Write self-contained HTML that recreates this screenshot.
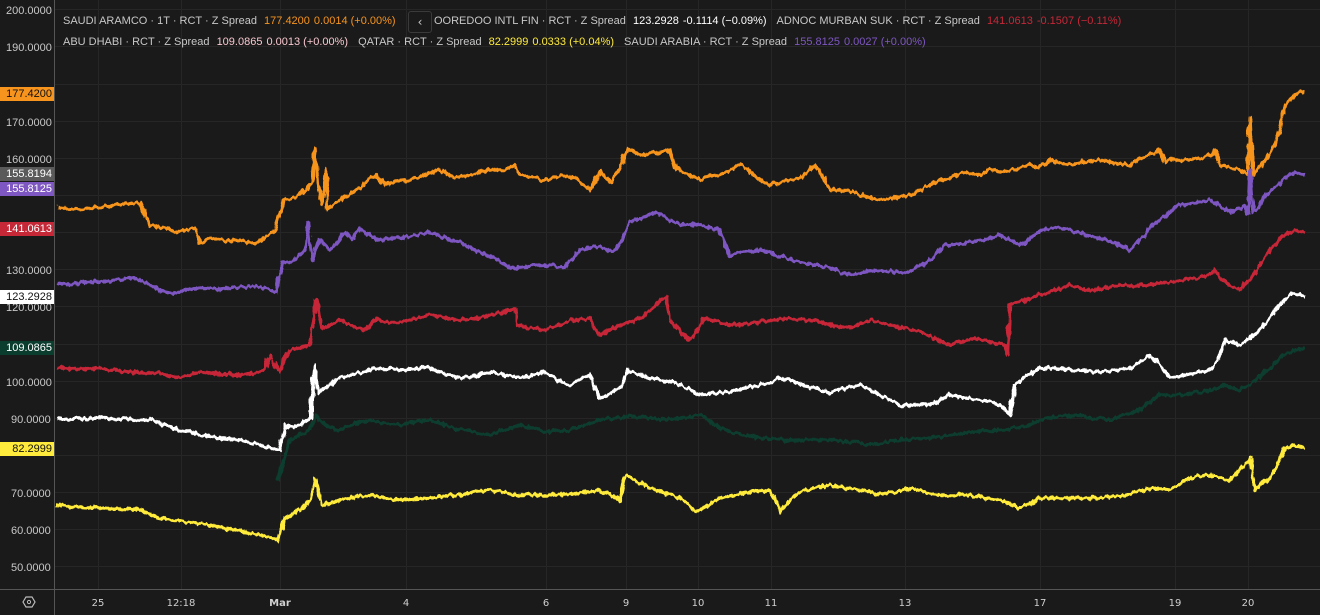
<!DOCTYPE html>
<html><head><meta charset="utf-8"><style>
html,body{margin:0;padding:0;background:#1a1a1a;width:1320px;height:615px;overflow:hidden;font-family:"Liberation Sans",sans-serif}
.lg{position:absolute;font-size:11px;color:#c8c8c8;white-space:nowrap}
.lg span{margin-left:4px}
.tag{position:absolute;left:0;width:54px;height:14px;font-size:11px;line-height:14px;text-align:right;padding-right:2px;box-sizing:border-box;color:#fff}
</style></head><body>
<svg width="1320" height="615" style="position:absolute;left:0;top:0">
<defs>
<filter id="jit" x="-2%" y="-10%" width="104%" height="120%">
<feTurbulence type="fractalNoise" baseFrequency="0.25 0.08" numOctaves="2" seed="3" result="n"/>
<feDisplacementMap in="SourceGraphic" in2="n" scale="6" xChannelSelector="R" yChannelSelector="G"/>
</filter>
</defs>
<g stroke="#262626" stroke-width="1">
<line x1="55" x2="1320" y1="9.5" y2="9.5"/><line x1="55" x2="1320" y1="46.5" y2="46.5"/><line x1="55" x2="1320" y1="84.5" y2="84.5"/><line x1="55" x2="1320" y1="121.5" y2="121.5"/><line x1="55" x2="1320" y1="158.5" y2="158.5"/><line x1="55" x2="1320" y1="195.5" y2="195.5"/><line x1="55" x2="1320" y1="232.5" y2="232.5"/><line x1="55" x2="1320" y1="269.5" y2="269.5"/><line x1="55" x2="1320" y1="306.5" y2="306.5"/><line x1="55" x2="1320" y1="344.5" y2="344.5"/><line x1="55" x2="1320" y1="381.5" y2="381.5"/><line x1="55" x2="1320" y1="418.5" y2="418.5"/><line x1="55" x2="1320" y1="455.5" y2="455.5"/><line x1="55" x2="1320" y1="492.5" y2="492.5"/><line x1="55" x2="1320" y1="529.5" y2="529.5"/><line x1="55" x2="1320" y1="566.5" y2="566.5"/>
<line x1="98.5" x2="98.5" y1="0" y2="589"/><line x1="181.5" x2="181.5" y1="0" y2="589"/><line x1="280.5" x2="280.5" y1="0" y2="589"/><line x1="406.5" x2="406.5" y1="0" y2="589"/><line x1="546.5" x2="546.5" y1="0" y2="589"/><line x1="626.5" x2="626.5" y1="0" y2="589"/><line x1="698.5" x2="698.5" y1="0" y2="589"/><line x1="771.5" x2="771.5" y1="0" y2="589"/><line x1="905.5" x2="905.5" y1="0" y2="589"/><line x1="1040.5" x2="1040.5" y1="0" y2="589"/><line x1="1175.5" x2="1175.5" y1="0" y2="589"/><line x1="1248.5" x2="1248.5" y1="0" y2="589"/>
</g>
<line x1="54.5" x2="54.5" y1="0" y2="615" stroke="#555"/>
<line x1="0" x2="1320" y1="589.5" y2="589.5" stroke="#555"/>
<g fill="none" stroke-width="3.4" stroke-linejoin="round" filter="url(#jit)">
<polyline stroke="#f7941d" points="57,207 80,209 100,207 120,205 140,203 145,215 150,225 165,228 180,232 195,228 200,242 210,238 225,241 240,240 255,244 265,237 275,230 280,215 283,200 295,198 305,190 312,182 315,148 318,185 322,205 326,170 328,210 340,200 360,188 375,175 385,185 395,182 410,180 425,175 440,170 455,178 470,175 490,170 505,170 515,165 520,175 535,178 545,180 560,176 575,177 590,190 600,172 610,182 620,168 628,148 640,155 650,153 660,152 670,150 675,168 680,170 690,175 700,180 710,176 720,175 730,170 740,165 750,172 760,180 770,185 785,182 800,178 815,165 825,180 830,190 845,190 860,195 870,198 880,200 895,198 910,195 920,190 930,185 940,180 950,178 958,174 965,172 978,175 990,170 1000,172 1010,170 1020,168 1030,165 1040,167 1050,160 1060,163 1070,165 1085,162 1100,160 1115,163 1130,165 1140,158 1150,155 1160,150 1165,162 1170,160 1185,160 1200,158 1210,155 1215,150 1220,165 1230,168 1240,170 1248,175 1250,118 1253,175 1260,168 1265,160 1272,150 1278,135 1285,105 1290,100 1295,95 1300,92 1305,93"/>
<polyline stroke="#7e57c2" points="57,283 70,285 90,282 110,281 130,278 140,280 150,285 160,290 175,293 185,290 200,288 220,289 240,287 255,286 270,290 276,292 283,262 292,262 300,255 305,250 308,222 312,260 316,248 320,240 330,250 338,240 345,232 352,240 360,228 370,236 380,240 390,238 400,238 415,235 430,232 445,238 460,242 470,248 480,252 495,258 510,268 530,266 550,265 565,268 570,260 575,255 580,250 590,248 600,245 610,252 615,250 622,240 630,222 642,218 655,212 668,218 680,225 690,224 700,225 710,228 720,230 725,245 730,255 745,252 760,250 770,252 785,258 800,262 815,265 830,268 840,272 850,275 865,272 880,270 895,272 910,272 920,266 930,260 938,252 945,245 958,244 970,242 985,240 1000,235 1010,240 1020,245 1030,238 1040,230 1055,228 1070,230 1085,235 1100,238 1115,244 1130,250 1138,242 1145,235 1152,225 1160,220 1170,212 1180,205 1195,203 1210,200 1220,206 1230,212 1240,208 1245,205 1248,214 1250,170 1253,212 1260,205 1265,195 1272,190 1280,183 1288,176 1295,172 1305,175"/>
<polyline stroke="#c62838" points="57,368 80,369 100,368 120,371 140,373 160,373 170,376 180,378 190,375 200,372 220,374 240,375 255,373 265,368 270,355 275,365 280,372 285,358 290,350 300,348 310,345 316,300 322,328 330,325 340,320 352,326 365,330 375,320 388,322 400,322 415,318 430,315 445,318 460,320 475,318 490,315 505,312 515,308 518,325 530,328 545,330 560,325 570,320 580,320 590,318 595,328 600,335 610,330 620,325 630,322 640,318 650,310 660,300 666,298 670,320 680,332 690,340 698,330 705,318 718,322 730,325 745,324 760,322 775,320 790,318 805,320 820,322 835,326 850,328 860,324 870,320 880,322 890,325 905,328 920,332 935,338 950,345 962,342 975,338 990,342 1005,345 1008,355 1010,305 1025,300 1040,295 1055,290 1070,285 1080,288 1090,290 1105,288 1120,285 1135,286 1150,285 1160,283 1170,282 1185,280 1200,278 1210,274 1215,270 1220,278 1225,282 1232,287 1240,290 1245,284 1250,280 1258,268 1265,255 1272,248 1280,238 1288,233 1295,230 1305,232"/>
<polyline stroke="#ffffff" points="57,418 80,419 100,418 125,419 150,420 162,424 175,428 188,432 200,435 220,438 240,440 255,444 270,448 280,450 285,425 292,427 300,425 310,418 315,365 318,395 322,390 330,385 340,378 355,374 370,370 385,368 400,370 415,369 430,368 445,374 460,378 475,376 490,372 505,375 520,378 532,375 545,372 558,380 570,385 580,380 590,375 595,388 600,398 610,394 620,388 628,370 640,375 650,378 660,380 670,382 680,385 690,390 700,395 715,393 730,392 745,388 760,385 770,382 780,378 790,380 800,385 815,388 830,392 845,388 860,385 870,390 880,395 890,400 900,405 915,405 930,405 940,400 950,395 965,398 980,400 990,402 1000,405 1005,410 1010,415 1015,385 1028,375 1040,368 1055,369 1070,370 1085,371 1100,372 1115,370 1130,368 1140,362 1150,355 1160,365 1170,378 1178,377 1185,375 1198,372 1210,370 1218,360 1225,340 1232,342 1240,345 1250,338 1260,330 1268,320 1275,310 1282,302 1290,295 1298,294 1305,296"/>
<polyline stroke="#0b3d2e" points="278,480 284,460 290,440 300,435 310,430 315,415 325,425 340,430 355,424 370,420 385,423 400,425 415,422 430,420 445,425 460,430 475,432 490,435 505,430 520,425 532,428 545,432 558,431 570,430 585,425 600,420 615,418 630,415 645,418 660,420 680,418 700,415 715,425 730,432 745,435 760,438 775,439 790,440 810,440 830,440 850,442 870,445 885,442 900,440 915,439 930,438 950,435 970,432 985,431 1000,430 1015,428 1030,425 1040,420 1050,418 1065,416 1080,415 1095,418 1110,420 1125,415 1140,410 1150,402 1160,395 1172,395 1185,395 1198,392 1210,390 1218,388 1225,385 1232,388 1240,390 1248,385 1255,380 1262,374 1270,368 1278,360 1285,355 1295,350 1305,348"/>
<polyline stroke="#ffeb3b" points="57,505 80,507 100,508 120,509 140,510 150,514 160,518 175,520 190,522 205,524 220,527 235,530 250,533 265,536 278,540 285,518 292,514 300,510 310,500 316,480 322,505 330,503 340,500 355,497 370,495 385,498 400,500 415,499 430,498 445,496 460,495 475,492 490,490 505,493 520,495 532,495 545,495 558,495 570,495 585,492 600,490 610,495 620,500 626,475 638,482 650,488 665,493 680,498 688,505 695,512 708,505 720,498 735,495 750,492 760,491 770,490 775,500 780,512 790,500 800,492 815,488 830,485 845,488 860,490 870,492 880,495 895,492 910,488 925,492 940,495 955,495 970,495 985,498 1000,500 1010,504 1020,508 1030,503 1040,498 1055,498 1070,498 1085,498 1100,498 1115,496 1130,495 1140,491 1150,488 1160,489 1170,490 1180,484 1190,478 1200,476 1210,475 1220,478 1230,480 1240,470 1248,462 1250,458 1255,490 1262,484 1270,478 1278,462 1285,448 1295,446 1305,447"/>
</g>
<g fill="#c8c8c8" font-family="Liberation Sans, sans-serif" font-size="11">
<text x="6" y="14">200.0000</text><text x="6" y="51">190.0000</text><text x="6" y="126">170.0000</text><text x="6" y="163">160.0000</text><text x="6" y="274">130.0000</text><text x="6" y="311">120.0000</text><text x="6" y="386">100.0000</text><text x="11" y="423">90.0000</text><text x="11" y="497">70.0000</text><text x="11" y="534">60.0000</text><text x="11" y="571">50.0000</text>
</g>
<g fill="#d0d0d0" font-family="DejaVu Sans, sans-serif" font-size="10" text-anchor="middle">
<text x="98" y="606">25</text><text x="181" y="606">12:18</text><text x="280" y="606" font-weight="bold">Mar</text><text x="406" y="606">4</text><text x="546" y="606">6</text><text x="626" y="606">9</text><text x="698" y="606">10</text><text x="771" y="606">11</text><text x="905" y="606">13</text><text x="1040" y="606">17</text><text x="1175" y="606">19</text><text x="1248" y="606">20</text>
</g>
<polygon points="23,602 26,597 32,597 35,602 32,607 26,607" fill="none" stroke="#bbb" stroke-width="1.2"/>
<circle cx="29" cy="602" r="1.6" fill="none" stroke="#bbb"/>
</svg>
<div class="tag" style="top:87px;background:#f7941d;color:#111">177.4200</div>
<div class="tag" style="top:167px;background:#5a5a5a">155.8194</div>
<div class="tag" style="top:182px;background:#7e57c2">155.8125</div>
<div class="tag" style="top:222px;background:#c62838">141.0613</div>
<div class="tag" style="top:290px;background:#fff;color:#111">123.2928</div>
<div class="tag" style="top:341px;background:#0b3d2e">109.0865</div>
<div class="tag" style="top:442px;background:#ffeb3b;color:#111">82.2999</div>
<div class="lg" style="left:63px;top:15px">SAUDI ARAMCO · 1T · RCT · Z Spread <span style="color:#f7941d">177.4200</span><span style="color:#f7941d">0.0014 (+0.00%)</span></div>
<div style="position:absolute;left:408px;top:11px;width:22px;height:20px;border:1px solid #3a3a3a;border-radius:3px;color:#ccc;font-size:12px;text-align:center;line-height:20px;font-family:'DejaVu Sans',sans-serif">‹</div>
<div class="lg" style="left:434px;top:15px">OOREDOO INTL FIN · RCT · Z Spread <span style="color:#fff">123.2928</span><span style="color:#fff">-0.1114 (−0.09%)</span><span style="margin-left:10px">ADNOC MURBAN SUK · RCT · Z Spread</span> <span style="color:#c62838">141.0613</span><span style="color:#c62838">-0.1507 (−0.11%)</span></div>
<div class="lg" style="left:63px;top:36px">ABU DHABI · RCT · Z Spread <span style="color:#f8c8d0">109.0865</span><span style="color:#f8c8d0">0.0013 (+0.00%)</span><span style="margin-left:10px">QATAR · RCT · Z Spread</span> <span style="color:#ffeb3b">82.2999</span><span style="color:#ffeb3b">0.0333 (+0.04%)</span><span style="margin-left:10px">SAUDI ARABIA · RCT · Z Spread</span> <span style="color:#7e57c2">155.8125</span><span style="color:#7e57c2">0.0027 (+0.00%)</span></div>
</body></html>
